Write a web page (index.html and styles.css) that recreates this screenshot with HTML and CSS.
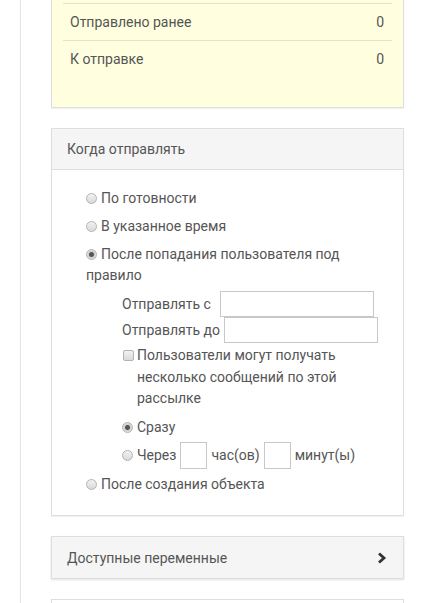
FILE: index.html
```html
<!DOCTYPE html>
<html lang="ru">
<head>
    <meta charset="UTF-8">
    <meta name="viewport" content="width=device-width, initial-scale=1.0">
    <title>Рассылка</title>
    <link rel="stylesheet" href="styles.css">
</head>
<body>
    <div class="main">
        <div class="panel panel-stats">
            <div class="stat-row"><span>&nbsp;</span></div>
            <div class="stat-row"><span>Отправлено ранее</span><span>0</span></div>
            <div class="stat-row"><span>К отправке</span><span>0</span></div>
        </div>

        <div class="panel">
            <div class="panel-heading">Когда отправлять</div>
            <div class="panel-body">
                <div class="option"><label><input type="radio" name="when">По готовности</label></div>
                <div class="option"><label><input type="radio" name="when">В указанное время</label></div>
                <div class="option">
                    <label><input type="radio" name="when" checked>После попадания пользователя под правило</label>
                    <div class="sub">
                        <div class="field-row">Отправлять с<input type="text" class="text-input wide-gap"></div>
                        <div class="field-row">Отправлять до<input type="text" class="text-input"></div>
                        <label class="check"><input type="checkbox"><span>Пользователи могут получать несколько сообщений по этой рассылке</span></label>
                        <div class="sub-option"><label><input type="radio" name="delay" checked>Сразу</label></div>
                        <div class="sub-option delay-row">
                            <label><input type="radio" name="delay">Через</label>
                            <input type="text" class="small-input">
                            <span>час(ов)</span>
                            <input type="text" class="small-input">
                            <span>минут(ы)</span>
                        </div>
                    </div>
                </div>
                <div class="option last-option"><label><input type="radio" name="when">После создания объекта</label></div>
            </div>
        </div>

        <div class="panel panel-collapsed">
            <div class="panel-heading">
                <span>Доступные переменные</span>
                <svg class="chevron" width="10" height="12" viewBox="0 0 10 12">
                    <polyline points="2,1.5 7,6 2,10.5" fill="none" stroke="#333" stroke-width="2.8"/>
                </svg>
            </div>
        </div>

        <div class="panel panel-next">
            <div class="panel-heading">&nbsp;</div>
        </div>
    </div>
</body>
</html>
```

FILE: styles.css
```css
body {
    font-family: Roboto, Arial, sans-serif;
    font-size: 14px;
    color: #555;
    background-color: #fff;
    margin: 0;
    padding: 0;
}

.main {
    margin: -45px 0 0 20px;
    border-left: 1px solid #e3e3e3;
    padding-bottom: 40px;
}

.panel {
    margin: 0 20px 20px 30px;
    background: #fff;
    border: 1px solid #dedede;
    box-shadow: 0 1px 1px rgba(0, 0, 0, 0.05);
}

.panel-stats {
    background: #ffffe0;
    padding: 11px 11px 30px;
}

.stat-row {
    display: flex;
    justify-content: space-between;
    padding: 8px 8px 8px 7px;
    line-height: 20px;
}

    .stat-row + .stat-row {
        border-top: 1px solid #e2e2cf;
    }

.panel-heading {
    display: flex;
    justify-content: space-between;
    align-items: center;
    padding: 10px 15px;
    line-height: 20px;
    background: #f5f5f5;
    border-bottom: 1px solid #dedede;
}

.panel-collapsed .panel-heading {
    border-bottom: none;
    padding: 11px 16px 10px 15px;
}

.panel-collapsed {
    box-shadow: 0 1px 2px rgba(0, 0, 0, 0.12);
}

.panel-body {
    padding: 18px 15px 20px 34px;
    line-height: 21px;
}

.option + .option {
    margin-top: 7px;
}

    .option.last-option {
        margin-top: 5px;
    }

input[type="radio"],
input[type="checkbox"] {
    appearance: none;
    -webkit-appearance: none;
    width: 11px;
    height: 11px;
    margin: 0 4px 0 0;
    border: 1px solid #b3b3b3;
    background: linear-gradient(#f2f2f2, #d9d9d9);
    vertical-align: -1px;
}

input[type="radio"] {
    border-radius: 50%;
}

    input[type="radio"]:checked {
        background: radial-gradient(circle, #555 0, #555 2px, #cfcfcf 3px, #e6e6e6 5px);
    }

input[type="checkbox"] {
    border-radius: 2px;
}

.sub {
    padding: 5px 0 0 36px;
}

.field-row {
    display: flex;
    align-items: center;
    height: 26px;
}

.text-input {
    width: 154px;
    height: 26px;
    box-sizing: border-box;
    margin-left: 4px;
    border: 1px solid #c8c8c8;
    padding: 2px 4px;
    font-family: inherit;
}

    .text-input.wide-gap {
        margin-left: 9px;
    }

.check {
    display: flex;
    align-items: flex-start;
    margin-top: 2px;
    line-height: 21.5px;
}

    .check input {
        flex: none;
        margin: 5px 3px 0 1px;
    }

.sub-option {
    margin-top: 7px;
}

.delay-row {
    display: flex;
    align-items: center;
    gap: 4px;
    margin-top: 4px;
}

.small-input {
    width: 27px;
    height: 27px;
    box-sizing: border-box;
    border: 1px solid #c8c8c8;
    padding: 0;
}

.panel-next .panel-heading {
    background: #fff;
    border-bottom: none;
}
```
